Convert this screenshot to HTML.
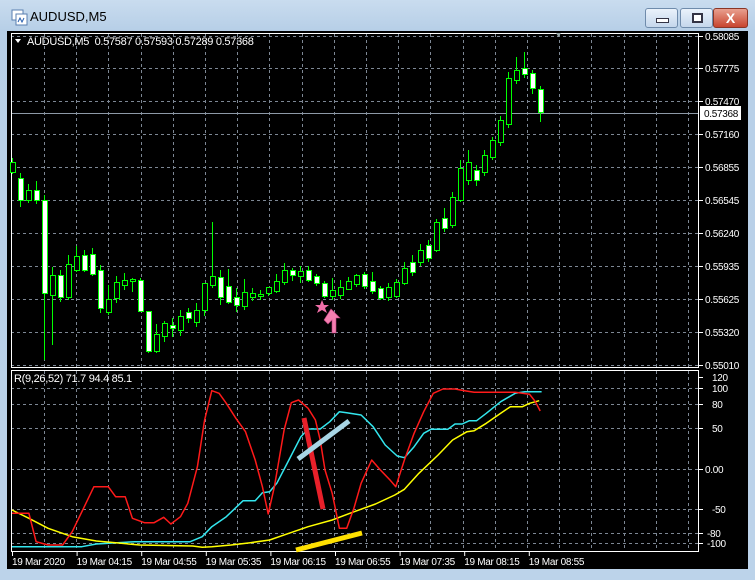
<!DOCTYPE html>
<html><head><meta charset="utf-8"><style>
body{margin:0;width:755px;height:580px;overflow:hidden;background:#bcd3ea;font-family:"Liberation Sans",sans-serif}
#win{position:absolute;left:0;top:0;width:755px;height:580px;background:linear-gradient(#c9dcef,#b7cfe7 30px,#bcd3ea);}
#title{position:absolute;left:30px;top:9px;font-size:13px;color:#000}
.btn{position:absolute;top:8px;height:18px;border:1px solid #6f8bab;border-radius:3px;background:linear-gradient(#eaf2fb,#c5d7ec)}
svg{position:absolute;left:0;top:0}
</style></head><body>
<div id="win">
<svg width="20" height="20" style="left:10px;top:8px"><rect x="2" y="2" width="11" height="10" fill="#fff" stroke="#5a7fb0"/><rect x="6" y="6" width="11" height="11" fill="#fff" stroke="#5a7fb0"/><path d="M8 14 l2-4 2 4 2-4" stroke="#2a60b0" fill="none"/></svg>
<div id="title">AUDUSD,M5</div>
<div class="btn" style="left:645px;width:31px"><div style="position:absolute;left:10px;top:9px;width:11px;height:3px;background:#fff;border:1px solid #334"></div></div>
<div class="btn" style="left:680px;width:31px"><div style="position:absolute;left:11px;top:4px;width:7px;height:6px;border:2px solid #334;background:#fff"></div></div>
<div class="btn" style="left:713px;width:33px;background:linear-gradient(#e9a08f,#c8452f);border-color:#8a3526;color:#fff;font-weight:bold;font-size:14px;text-align:center;line-height:18px">X</div>
<svg id="c" width="755" height="580"></svg>
</div>
<script>
var s='';
function L(x1,y1,x2,y2,c,w,d){s+='<line x1="'+x1+'" y1="'+y1+'" x2="'+x2+'" y2="'+y2+'" stroke="'+c+'" stroke-width="'+(w||1)+'"'+(d?' stroke-dasharray="3,3"':'')+'/>';}
function T(x,y,t,c,fs){s+='<text x="'+x+'" y="'+y+'" fill="'+(c||'#fff')+'" font-size="'+(fs||10)+'" letter-spacing="-0.3" font-family="Liberation Sans,sans-serif">'+t+'</text>';}
s+='<rect x="7" y="31" width="741" height="538" fill="#000"/>';
var gc='#7d8794';
for(var x=44;x<699;x+=32.2)L(Math.round(x)+.5,34,Math.round(x)+.5,367,gc,1,1),L(Math.round(x)+.5,371,Math.round(x)+.5,551,gc,1,1);
var py=[36,68,101,134,167,200,233,266,299,332,365],pl=['0.58085','0.57775','0.57470','0.57160','0.56855','0.56545','0.56240','0.55935','0.55625','0.55320','0.55010'];
py.forEach(function(y,i){L(11,y+.5,699,y+.5,gc,1,1);L(699,y+.5,703,y+.5,'#fff');T(705,y+4,pl[i]);});
var iy=[377,388,404,428,469,509,533,543],il=['120','100','80','50','0.00','-50','-80','-100'];
iy.forEach(function(y,i){if(i>0)L(11,y+.5,699,y+.5,gc,1,1);L(699,y+.5,703,y+.5,'#fff');T(i>5?707:(i==4?705:712),y+4,il[i]);});
L(11,113.5,699,113.5,'#8d99a6');
s+='<rect x="700" y="106" width="41" height="14" fill="#fff"/>';T(704,117,'0.57368','#000');
s+='<rect x="11.5" y="33.5" width="687" height="334" fill="none" stroke="#fff"/>';
s+='<rect x="11.5" y="370.5" width="687" height="181" fill="none" stroke="#fff"/>';
s+='<path d="M556 33 l5 0 -2.5 4z" fill="#9aa"/>';
s+='<path d="M15 39 l6 0 -3 4z" fill="#fff"/>';T(27,45,'AUDUSD,M5&nbsp; 0.57587 0.57593 0.57289 0.57368','#fff',11);
T(14,382,'R(9,26,52) 71.7 94.4 85.1','#fff',11);
var tl=['19 Mar 2020','19 Mar 04:15','19 Mar 04:55','19 Mar 05:35','19 Mar 06:15','19 Mar 06:55','19 Mar 07:35','19 Mar 08:15','19 Mar 08:55'];
tl.forEach(function(t,i){L(12+i*64.6+.5,552,12+i*64.6+.5,556,'#fff');T(12+i*64.6,565,t);});
var C=[[12,162,172,0,158,174],[20,178,200,1,173,207],[28,190,200,0,184,203],[36,190,200,1,181,204],[44,200,293,1,195,360],[52,275,295,0,267,345],[60,275,297,1,270,302],[68,264,297,0,255,300],[76,256,270,0,246,272],[84,255,270,1,250,272],[92,254,274,1,248,276],[100,270,308,1,265,313],[108,299,312,0,285,315],[116,282,298,0,276,303],[124,280,285,0,273,290],[132,279,281,0,278,292],[140,280,311,1,278,312],[148,311,351,1,311,353],[156,334,351,0,324,353],[164,323,336,0,321,342],[172,325,328,1,318,337],[180,316,330,0,310,336],[188,312,318,1,308,323],[196,310,322,0,303,327],[204,283,310,0,283,316],[212,276,285,0,222,288],[220,277,297,1,270,305],[228,286,302,1,269,304],[236,297,305,1,288,312],[244,292,306,0,279,310],[252,293,297,0,288,301],[260,294,296,0,290,300],[268,287,293,0,289,296],[276,281,291,0,274,293],[284,270,282,0,263,285],[292,270,275,1,268,281],[300,271,276,0,266,283],[308,270,280,1,266,282],[316,276,283,1,274,286],[324,283,296,1,281,298],[332,290,296,0,278,300],[340,287,295,0,280,299],[348,281,289,0,277,290],[356,275,284,0,274,287],[364,274,286,1,272,289],[372,281,291,1,272,294],[380,288,298,1,286,300],[388,287,297,0,283,301],[396,282,296,0,279,298],[404,268,283,0,262,285],[412,262,272,1,255,276],[420,250,262,0,244,266],[428,245,258,1,240,262],[436,222,250,0,219,252],[444,218,228,1,208,232],[452,197,225,0,192,228],[460,168,200,0,160,202],[468,162,180,0,150,185],[476,170,180,1,165,186],[484,155,172,0,150,176],[492,140,157,0,137,160],[500,120,142,0,116,146],[508,78,124,0,72,128],[516,70,80,0,57,84],[524,68,74,1,52,78],[532,73,88,1,70,94],[540,89,112,1,86,122]];
C.forEach(function(c){var x=c[0];L(x+.5,c[4],x+.5,c[5],'#00ff00');s+='<rect x="'+(x-2)+'.5" y="'+c[1]+'.5" width="5" height="'+Math.max(1,c[2]-c[1])+'" fill="'+(c[3]?'#fff':'#000')+'" stroke="#00ff00"/>';});
s+='<path d="M322 300 l2 5 5 0 -4 3 2 5 -5-3 -5 3 2-5 -4-3 5 0z" fill="#f06fa8"/>';
s+='<path d="M331 309 l9 9 -4 0 0 15 -4 0 0-13 -4 4 -4-4z" fill="#f47fb0" stroke="#c04080" stroke-width=".6"/>';
function P(a,c,w){var p=[];for(var i=0;i<a.length;i+=2)p.push((a[i]/2.077).toFixed(1)+','+(360+a[i+1]/3).toFixed(1));s+='<polyline points="'+p.join(' ')+'" fill="none" stroke="'+c+'" stroke-width="'+(w||1.5)+'" stroke-linejoin="round"/>';}
P([25,560,170,560,200,552,280,545,395,545,420,530,440,500,470,470,505,422,530,422,545,398,560,395,575,370,600,300,625,230,640,207,665,207,685,185,705,155,720,158,750,165,775,200,800,255,825,288,840,293,860,260,880,220,895,208,930,208,945,192,960,192,975,182,990,182,1010,160,1040,125,1070,100,1090,95,1125,95],'#33e6ee');
P([25,450,60,475,100,505,150,530,200,543,290,555,400,558,420,562,440,560,480,555,520,548,560,540,600,520,640,500,690,480,730,458,780,432,820,405,840,388,870,340,910,285,940,240,970,215,985,212,1010,190,1040,160,1060,140,1085,140,1100,130,1120,122],'#ffff00');
P([25,460,60,460,75,545,100,555,130,555,150,515,175,440,195,380,225,380,240,410,260,410,275,475,300,488,320,488,340,472,355,492,375,470,390,430,410,320,425,180,440,92,455,100,470,130,490,175,510,215,530,300,545,380,557,462,570,380,590,210,605,128,620,120,640,145,655,180,665,240,675,330,690,400,705,505,720,505,735,445,750,370,772,300,790,330,810,360,822,380,840,300,860,220,880,155,900,100,920,87,945,87,965,92,985,97,1070,97,1100,103,1112,125,1122,153],'#ff1a1a');
s+='<line x1="304" y1="418" x2="323" y2="509" stroke="#e8202a" stroke-width="5"/>';
s+='<line x1="298" y1="459" x2="349" y2="421" stroke="#a8d6e6" stroke-width="5"/>';
s+='<line x1="296" y1="550" x2="362" y2="533" stroke="#ffe000" stroke-width="5"/>';
document.getElementById('c').innerHTML=s;
</script>
</body></html>
